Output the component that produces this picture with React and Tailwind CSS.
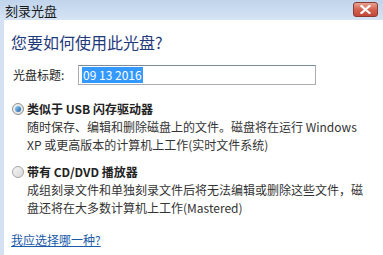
export default function App() {
  const font = { fontFamily: '"Noto Sans CJK SC", "Noto Sans", sans-serif' };
  return (
    <div className="w-[383px] h-[255px] overflow-hidden bg-[#d3e1f2] flex flex-col" style={font}>
      <div className="h-[20px] flex items-center justify-between bg-gradient-to-b from-[#c0d4ec] to-[#d6e4f4] pl-[5px] pr-[5px]">
        <span className="text-[13px] leading-none text-[#1a1a1a]">刻录光盘</span>
        <div className="w-[25px] h-[15px] mt-[-2px] rounded-[3px] border border-[#8a3c34] bg-gradient-to-b from-[#e7a393] via-[#d5614f] to-[#c24a3a] flex items-center justify-center">
          <svg width="11" height="9" viewBox="0 0 11 9">
            <path d="M1.5 1 L9.5 8 M9.5 1 L1.5 8" stroke="#fff" strokeWidth="2.2" strokeLinecap="square" />
          </svg>
        </div>
      </div>
      <div className="flex-1 ml-[4px] bg-white flex flex-col pl-[7px]">
        <div className="mt-[12px] text-[16px] leading-[20px] text-[#1f3a7a]">您要如何使用此光盘?</div>
        <div className="mt-[13px] flex items-center">
          <span className="ml-[2px] w-[65px] text-[12px] text-[#222]">光盘标题:</span>
          <div className="w-[238px] h-[20px] border border-[#abadb3] border-t-[#7a8a99] bg-white flex items-center pl-[3px]">
            <span className="bg-[#3399ff] text-white text-[12px] leading-[16px] px-[1px]">09 13 2016</span>
          </div>
        </div>
        <div className="mt-[15px] flex items-start">
          <div className="mt-[3px] ml-[1px] w-[12px] h-[12px] rounded-full border border-[#8e8f8f] bg-gradient-to-br from-[#f4f4f4] to-[#dcdcdc] flex items-center justify-center">
            <div className="w-[6px] h-[6px] rounded-full bg-gradient-to-br from-[#9ad6f7] to-[#1f5fa8]"></div>
          </div>
          <div className="ml-[3px] flex flex-col">
            <span className="text-[12px] leading-[18px] font-bold text-[#222]">类似于 USB 闪存驱动器</span>
            <span className="text-[12px] leading-[18px] text-[#333]">随时保存、编辑和删除磁盘上的文件。磁盘将在运行 Windows</span>
            <span className="text-[12px] leading-[18px] text-[#333]">XP 或更高版本的计算机上工作(实时文件系统)</span>
          </div>
        </div>
        <div className="mt-[9px] flex items-start">
          <div className="mt-[3px] ml-[1px] w-[12px] h-[12px] rounded-full border border-[#a5a5a5] bg-gradient-to-br from-[#f6f6f6] to-[#d8d8d8]"></div>
          <div className="ml-[3px] flex flex-col">
            <span className="text-[12px] leading-[18px] font-bold text-[#222]">带有 CD/DVD 播放器</span>
            <span className="text-[12px] leading-[18px] text-[#333]">成组刻录文件和单独刻录文件后将无法编辑或删除这些文件，磁</span>
            <span className="text-[12px] leading-[18px] text-[#333]">盘还将在大多数计算机上工作(Mastered)</span>
          </div>
        </div>
        <div className="mt-[14px] text-[12px] leading-[18px] text-[#1a5aa8] underline">我应选择哪一种?</div>
      </div>
    </div>
  );
}
